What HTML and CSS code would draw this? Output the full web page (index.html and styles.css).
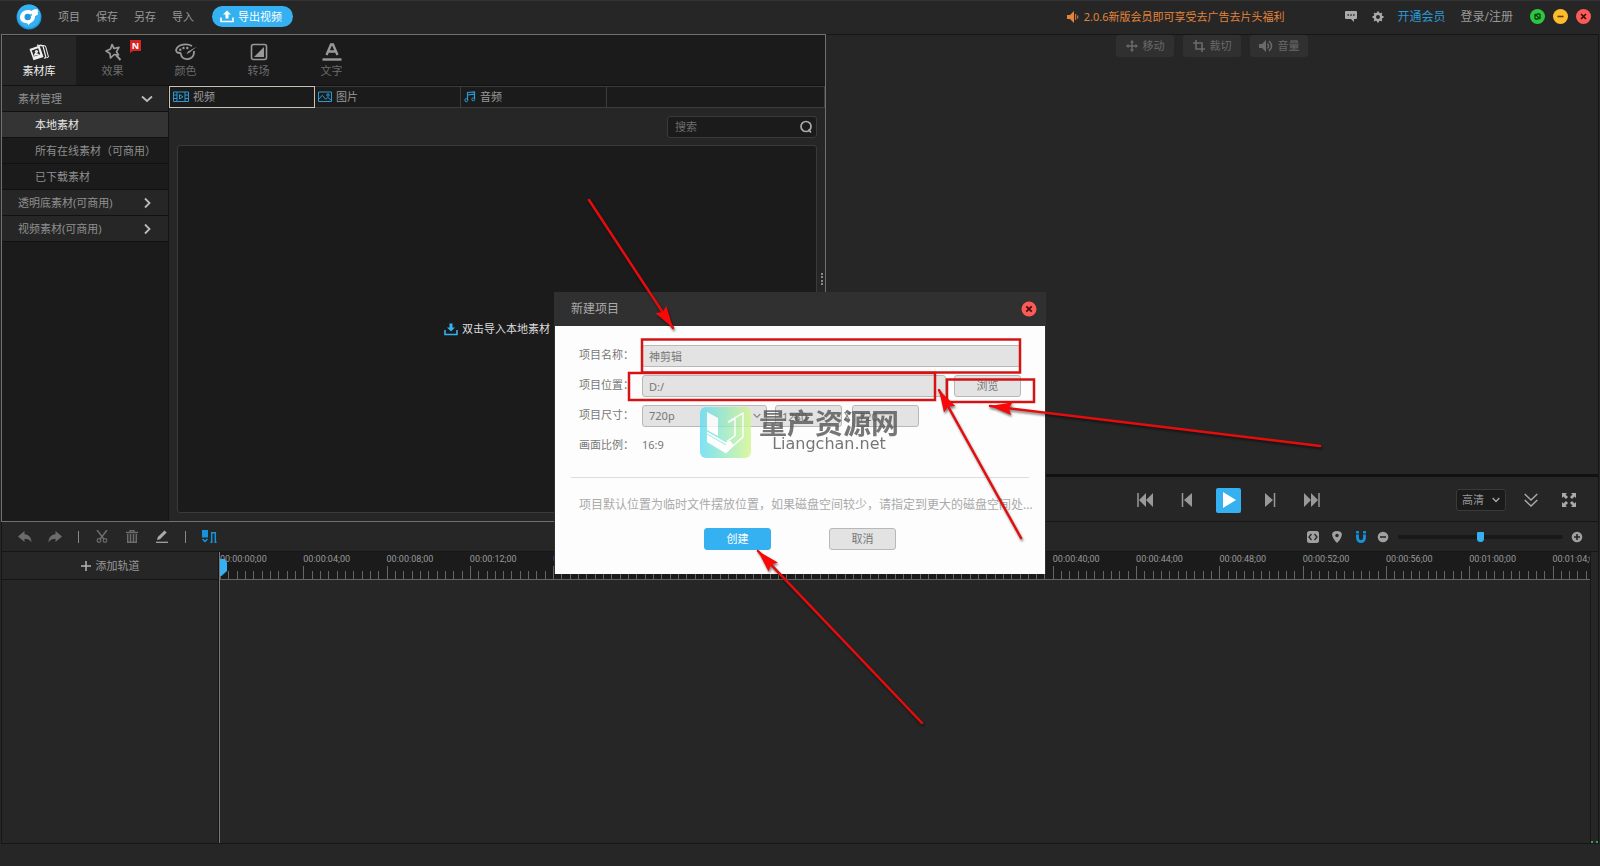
FILE: index.html
```html
<!DOCTYPE html>
<html lang="zh-CN">
<head>
<meta charset="utf-8">
<title>神剪辑</title>
<link rel="stylesheet" href="styles.css">
</head>
<body>
<div class="app">
  <header class="topbar">
    <svg class="logo" viewBox="0 0 26 26" width="26" height="26"><circle cx="13" cy="13" r="12.500" fill="#2196dc"/><circle cx="13" cy="12" r="11.500" fill="#35b1f2"/><path d="M4 13.500c0-4.500 3.500-7.500 8-7.500 1.500 0 2.500.3 3.500 1 1.500-1.500 4-2 6.500-1.500l-.5 1.200 1 .6-1 1.200.7 1.500c-1 1.200-2 1.700-3.200 2 .3 3.500-2.500 6.500-5 7.200L12.500 21l-1.500-1.700C7 19 4 17 4 13.500z" fill="#fff"/><path d="M8.500 13a3.200 3.200 0 1 1 6.400 0 3.200 3.200 0 1 1-6.400 0zM14 11l2-1.500-.5 2.500z" fill="#2196dc"/></svg>
    <nav class="menu">
      <button>项目</button><button>保存</button><button>另存</button><button>导入</button>
    </nav>
    <button class="export"><svg viewBox="0 0 14 13" width="14" height="13"><path d="M7 .5l4 4H8.500v4h-3v-4H3z" fill="#fff"/><path d="M1 7.500v4h12v-4" fill="none" stroke="#fff" stroke-width="1.600"/></svg>导出视频</button>
    <div class="top-right">
      <a class="notice" href="#"><svg viewBox="0 0 12 12" width="12" height="12"><path d="M0 4h3l4-4v12L3 8H0z" fill="#e2843a"/><path d="M8.700 3v6M10.700 4.500v3" stroke="#e2843a"/></svg>2.0.6新版会员即可享受去广告去片头福利</a>
      <button class="icon-btn chat" aria-label="消息"><svg viewBox="0 0 12 11" width="12" height="11"><path d="M1 0h10q1 0 1 1v6q0 1-1 1H9v3L6 8H1Q0 8 0 7V1q0-1 1-1z" fill="#aaa"/><path d="M2.500 4h1.500m1.300 0h1.500m1.300 0h1.500" stroke="#262626" stroke-width="1.500"/></svg></button>
      <button class="icon-btn gear" aria-label="设置"><svg viewBox="0 0 12 12" width="12" height="12"><circle cx="6" cy="6" r="3.200" fill="none" stroke="#aaa" stroke-width="2.400"/><path d="M6 .5v2M6 9.500v2M.5 6h2M9.500 6h2M2.200 2.200l1.400 1.400M8.400 8.400l1.400 1.400M2.200 9.800l1.400-1.400M8.400 3.600l1.400-1.400" stroke="#aaa" stroke-width="1.800"/></svg></button>
      <a class="vip" href="#">开通会员</a>
      <a class="login" href="#">登录/注册</a>
      <div class="window-btns">
        <button aria-label="最大化"><svg viewBox="0 0 15 15" width="15" height="15"><circle cx="7.500" cy="7.500" r="7.500" fill="#2bc840"/><path d="M5 10V5M5 5l5 5M10 10V5M6.500 5H10M5 10h3.500" fill="none" stroke="#0c3d14" stroke-width="1.300"/></svg></button>
        <button aria-label="最小化"><svg viewBox="0 0 15 15" width="15" height="15"><circle cx="7.500" cy="7.500" r="7.500" fill="#fdbc2e"/><path d="M4.500 7.500h6" stroke="#5c3d00" stroke-width="1.600"/></svg></button>
        <button aria-label="关闭"><svg viewBox="0 0 15 15" width="15" height="15"><circle cx="7.500" cy="7.500" r="7.500" fill="#fb5b57"/><path d="M5 5l5 5M10 5l-5 5" stroke="#3a0808" stroke-width="1.600"/></svg></button>
      </div>
    </div>
  </header>

  <main class="main">
    <section class="library">
      <nav class="tool-tabs">
        <button class="tool active"><svg viewBox="0 0 20 18" width="20" height="18"><path d="M11 2l5.500 1 3 11-1.500.8" fill="none" stroke="#eee"/><path d="M8 2.200l6 .8 3 11.500-2 .7" fill="none" stroke="#eee" stroke-width="1.200"/><path d="M.5 6l10-3.500 4 11.500L4.500 17.200z" fill="#eee"/><path d="M2.700 7.500l6.500-2.300 2 6.200-6.300 2.200z" fill="#262626"/><circle cx="7.500" cy="8.500" r="1.600" fill="#eee"/><path d="M4.500 13l1.500-3.500 5 2z" fill="#eee"/></svg>素材库</button>
        <button class="tool"><svg viewBox="0 0 20 18" width="20" height="18"><path d="M9 1.500l2 4 5-1.200-2.500 4.400 2 3.300-4.300-.5L7.500 15 7 10.500 3 8l4.500-2z" fill="none" stroke="#999" stroke-width="1.700" stroke-linejoin="round"/><path d="M13 12l4.500 5" stroke="#999" stroke-width="2"/></svg>效果<span class="badge">N</span></button>
        <button class="tool"><svg viewBox="0 0 22 18" width="22" height="18"><path d="M17 3C12 .2 3 1.200 1.200 6.500c-.6 3 2 3.500 3.800 3.500 1.500 0 .5 2 2 4 2.500 3.200 9.500 2.800 11.300-1.500.8-2 .7-3 .7-4.500" fill="none" stroke="#999" stroke-width="1.800"/><path d="M22 3.500L14 10l-2.500 1 1.500-2.500z" fill="#999"/><circle cx="5.300" cy="6.800" r="1.200" fill="#999"/><circle cx="8.500" cy="5" r="1.200" fill="#999"/><circle cx="12.300" cy="5" r="1.200" fill="#999"/></svg>颜色</button>
        <button class="tool"><svg viewBox="0 0 18 18" width="18" height="18"><rect x="1.500" y="1.500" width="15" height="15" rx="2" fill="none" stroke="#999" stroke-width="1.600"/><path d="M14 4v10H4z" fill="#999"/></svg>转场</button>
        <button class="tool"><svg viewBox="0 0 20 18" width="20" height="18"><path d="M4.500 12L9 1.500h2L15.500 12M6.500 8.500h7" fill="none" stroke="#999" stroke-width="2.400"/><path d="M.5 16.500h19" stroke="#999" stroke-width="2.400"/></svg>文字</button>
      </nav>
      <div class="library-body">
        <aside class="sidebar">
          <button class="group">素材管理<svg viewBox="0 0 12 12" width="12" height="12"><path d="M1 3.500L6 8l5-4.500" fill="none" stroke="#bbb" stroke-width="1.800"/></svg></button>
          <button class="item selected">本地素材</button>
          <button class="item">所有在线素材（可商用）</button>
          <button class="item">已下载素材</button>
          <button class="group">透明底素材(可商用)<svg viewBox="0 0 12 12" width="12" height="12"><path d="M4 1.500L8.500 6 4 10.500" fill="none" stroke="#bbb" stroke-width="1.800"/></svg></button>
          <button class="group">视频素材(可商用)<svg viewBox="0 0 12 12" width="12" height="12"><path d="M4 1.500L8.500 6 4 10.500" fill="none" stroke="#bbb" stroke-width="1.800"/></svg></button>
        </aside>
        <div class="media">
          <div class="media-tabs">
            <button class="media-tab on"><svg viewBox="0 0 16 12" width="16" height="12"><path d="M.5 1h15v9.500H.5zM4 1v9.500M12 1v9.500M.5 4h3.500M.5 7.500h3.500M12 4h3.500M12 7.500h3.500" fill="none" stroke="#2b9ad4"/><path d="M6.500 3.500v4.500l3.500-2.200z" fill="none" stroke="#2b9ad4"/></svg>视频</button>
            <button class="media-tab"><svg viewBox="0 0 14 12" width="14" height="12"><path d="M.5 1h13v9.500H.5zM.5 8.500l3.800-4.200 3.500 4 2-2 3.700 3.200" fill="none" stroke="#2b9ad4"/><circle cx="10" cy="4" r="1.200" fill="none" stroke="#2b9ad4"/></svg>图片</button>
            <button class="media-tab"><svg viewBox="0 0 12 12" width="12" height="12"><path d="M3.500 9V1.500L10.500.8V8M3.500 4l7-.8" fill="none" stroke="#2b9ad4" stroke-width="1.200"/><circle cx="2.300" cy="9.200" r="1.500" fill="none" stroke="#2b9ad4"/><circle cx="9.300" cy="8.300" r="1.500" fill="none" stroke="#2b9ad4"/></svg>音频</button>
            <span class="media-rest"></span>
          </div>
          <div class="media-content">
            <label class="search"><input type="text" placeholder="搜索" aria-label="搜索"><svg viewBox="0 0 14 14" width="14" height="14"><circle cx="7" cy="6.500" r="5" fill="none" stroke="#aaa" stroke-width="1.700"/><path d="M9.500 9.500l2.500 3" stroke="#aaa" stroke-width="1.700"/></svg></label>
            <div class="dropzone"><svg viewBox="0 0 14 13" width="14" height="13"><path d="M7 8.500l4-4H8.500v-4h-3v4H3z" fill="#35b1f2"/><path d="M1 7v4.500h12V7" fill="none" stroke="#35b1f2" stroke-width="1.600"/></svg>双击导入本地素材</div>
          </div>
          <span class="grip"></span>
        </div>
      </div>
    </section>

    <section class="preview">
      <div class="stage">
        <button class="stage-btn"><svg viewBox="0 0 12 12" width="12" height="12"><path d="M6 1v10M1 6h10" stroke="#6a6a6a" stroke-width="1.500"/><path d="M6 0l2.200 2.500H3.800zM6 12l2.200-2.500H3.800zM0 6l2.500-2.200v4.400zM12 6L9.500 3.800v4.400z" fill="#6a6a6a"/></svg>移动</button>
        <button class="stage-btn"><svg viewBox="0 0 12 12" width="12" height="12"><path d="M3 0v9h9M0 3h9v9" fill="none" stroke="#6a6a6a" stroke-width="1.600"/></svg>裁切</button>
        <button class="stage-btn"><svg viewBox="0 0 14 12" width="14" height="12"><path d="M0 4h3l4-4v12L3 8H0z" fill="#6a6a6a"/><path d="M8.500 3.500q2 2.500 0 5M10 1q5 5 0 10" fill="none" stroke="#6a6a6a" stroke-width="1.500"/></svg>音量</button>
      </div>
      <div class="player">
        <div class="transport">
          <button aria-label="开头"><svg viewBox="0 0 16 14" width="16" height="14"><path d="M1 0v14" stroke="#999" stroke-width="1.500"/><path d="M9 0v14L2 7zM16 0v14L9 7z" fill="#999"/></svg></button>
          <button aria-label="上一帧"><svg viewBox="0 0 16 14" width="16" height="14"><path d="M3.500 0v14" stroke="#999" stroke-width="1.500"/><path d="M13 0v14L5 7z" fill="#999"/></svg></button>
          <button class="play" aria-label="播放"><svg viewBox="0 0 16 16" width="16" height="16"><path d="M2 0l13 8-13 8z" fill="#fff"/></svg></button>
          <button aria-label="下一帧"><svg viewBox="0 0 16 14" width="16" height="14"><path d="M12.500 0v14" stroke="#999" stroke-width="1.500"/><path d="M3 0v14l8-7z" fill="#999"/></svg></button>
          <button aria-label="结尾"><svg viewBox="0 0 16 14" width="16" height="14"><path d="M15 0v14" stroke="#999" stroke-width="1.500"/><path d="M7 0v14l7-7zM0 0v14l7-7z" fill="#999"/></svg></button>
        </div>
        <div class="player-right">
          <span class="quality"><select aria-label="清晰度"><option>高清</option></select><svg viewBox="0 0 8 6" width="8" height="6"><path d="M.7 1L4 4.500 7.300 1" fill="none" stroke="#aaa" stroke-width="1.300"/></svg></span>
          <button aria-label="收起"><svg viewBox="0 0 14 14" width="14" height="14"><path d="M.7 1L7 7l6.300-6M.7 7L7 13l6.300-6" fill="none" stroke="#aaa" stroke-width="1.400"/></svg></button>
          <button aria-label="全屏"><svg viewBox="0 0 14 14" width="14" height="14"><path d="M0 0h5L3.500 1.500 6 4 4 6 1.500 3.500 0 5zM14 0v5l-1.500-1.500L10 6 8 4l2.500-2.500L9 0zM0 14V9l1.500 1.500L4 8l2 2-2.500 2.500L5 14zM14 14H9l1.500-1.500L8 10l2-2 2.500 2.500L14 9z" fill="#aaa"/></svg></button>
        </div>
      </div>
    </section>
  </main>

  <section class="timeline">
    <div class="edit-bar">
      <div class="edit-left">
        <button aria-label="撤销"><svg viewBox="0 0 14 12" width="14" height="12"><path d="M0 5.500L6.500 0v3.200C11 3.500 13.500 6.500 13.500 11.500 11.500 8.500 9.500 7.800 6.500 7.800V11z" fill="#6c6c6c"/></svg></button>
        <button aria-label="重做"><svg viewBox="0 0 14 12" width="14" height="12"><path d="M14 5.500L7.500 0v3.200C3 3.500.5 6.500.5 11.500 2.500 8.500 4.500 7.800 7.500 7.800V11z" fill="#6c6c6c"/></svg></button>
        <i class="sep"></i>
        <button aria-label="剪切"><svg viewBox="0 0 12 13" width="12" height="13"><path d="M1 0l6.800 9M11 0L4.200 9" stroke="#6c6c6c" stroke-width="1.500"/><circle cx="3" cy="10.500" r="1.800" fill="none" stroke="#6c6c6c" stroke-width="1.200"/><circle cx="9" cy="10.500" r="1.800" fill="none" stroke="#6c6c6c" stroke-width="1.200"/></svg></button>
        <button aria-label="删除"><svg viewBox="0 0 12 13" width="12" height="13"><path d="M0 2.500h12M4 2V.7h4V2" fill="none" stroke="#6c6c6c" stroke-width="1.300"/><path d="M1.700 4v8.300h8.600V4M4.500 4v8M7.500 4v8" fill="none" stroke="#6c6c6c" stroke-width="1.500"/></svg></button>
        <button aria-label="编辑"><svg viewBox="0 0 12 13" width="12" height="13"><path d="M1 10l.8-3L8.500.5l2.200 2L4 9.300z" fill="#aaa"/><path d="M0 12.300h12" stroke="#aaa" stroke-width="1.200"/></svg></button>
        <i class="sep"></i>
        <button aria-label="吸附轨道"><svg viewBox="0 0 15 13" width="15" height="13"><path d="M0 0h6v7.500H0z" fill="#1593dc"/><path d="M.5 9L3 11.500 5.500 9M9.700 12.500V2.700h3.600v9.800M8.500 12.200h2M12.500 12.200h2" fill="none" stroke="#1593dc" stroke-width="1.500"/></svg></button>
      </div>
      <div class="edit-right">
        <button aria-label="适应"><svg viewBox="0 0 12 12" width="12" height="12"><rect width="12" height="12" rx="2.500" fill="#a0a0a0"/><path d="M4.500 3L2 6l2.500 3M7.500 3L10 6 7.500 9" fill="none" stroke="#262626" stroke-width="1.300"/></svg></button>
        <button aria-label="标记"><svg viewBox="0 0 12 12" width="12" height="12"><path d="M6 0c7 0 6 6 0 12C0 6-1 0 6 0z" fill="#a0a0a0"/><circle cx="6" cy="4.500" r="1.700" fill="#262626"/></svg></button>
        <button aria-label="磁吸"><svg viewBox="0 0 12 12" width="12" height="12"><path d="M2.500 3.500v3.300c0 5 7 5 7 0V3.500" fill="none" stroke="#1593dc" stroke-width="2.800"/><path d="M2.500 0v2.500M9.500 0v2.500" stroke="#1593dc" stroke-width="2.800"/></svg></button>
        <button aria-label="缩小"><svg viewBox="0 0 12 12" width="12" height="12"><circle cx="6" cy="6" r="5.300" fill="#a0a0a0"/><path d="M3 6h6" stroke="#262626" stroke-width="1.600"/></svg></button>
        <input class="zoom" type="range" min="0" max="100" value="50" aria-label="缩放">
        <button aria-label="放大"><svg viewBox="0 0 12 12" width="12" height="12"><circle cx="6" cy="6" r="5.300" fill="#a0a0a0"/><path d="M3 6h6M6 3v6" stroke="#262626" stroke-width="1.600"/></svg></button>
      </div>
    </div>
    <div class="tracks">
      <div class="track-heads"><button class="add-track"><svg viewBox="0 0 10 10" width="10" height="10"><path d="M0 5h10M5 0v10" stroke="#b5b5b5" stroke-width="1.500"/></svg>添加轨道</button></div>
      <div class="track-area">
        <div class="ruler" id="ruler"></div>
        <span class="playhead"></span>
      </div>
      <div class="meter"></div>
    </div>
  </section>
  <footer class="status"></footer>
</div>

<div class="overlay">
  <form class="dialog" role="dialog" aria-labelledby="dlg-title">
    <div class="dialog-head"><h2 id="dlg-title">新建项目</h2>
      <button type="button" aria-label="关闭"><svg viewBox="0 0 16 16" width="16" height="16"><circle cx="8" cy="8" r="7.500" fill="#fb5b57"/><path d="M5.300 5.300l5.400 5.400M10.700 5.300l-5.400 5.400" stroke="#4a0c0c" stroke-width="1.800"/></svg></button></div>
    <div class="dialog-body">
      <div class="row"><label for="name">项目名称：</label><input class="field grow" id="name" type="text" value="神剪辑"></div>
      <div class="row"><label for="loc">项目位置：</label><input class="field grow" id="loc" type="text" value="D:/"><button type="button" class="btn">浏览</button></div>
      <div class="row"><label for="size">项目尺寸：</label>
        <span class="size-wrap"><select class="field size" id="size"><option>720p</option></select><svg viewBox="0 0 8 6" width="8" height="6"><path d="M.7 1L4 4.500 7.300 1" fill="none" stroke="#888" stroke-width="1.200"/></svg></span>
        <input class="field num" type="text" value="1280" aria-label="宽度"><span class="times">X</span><input class="field num" type="text" value="720" aria-label="高度"></div>
      <div class="row"><span class="label">画面比例：</span><span class="ratio">16:9</span></div>
      <hr>
      <p class="hint">项目默认位置为临时文件摆放位置，如果磁盘空间较少，请指定到更大的磁盘空间处...</p>
      <div class="actions"><button type="submit" class="btn primary">创建</button><button type="button" class="btn">取消</button></div>
    </div>
    <div class="watermark">
      <svg viewBox="0 0 51 51" width="51" height="51"><defs><linearGradient id="wm" x1="0" x2="1"><stop offset="0" stop-color="#5fdcf5"/><stop offset="1" stop-color="#d3f78c"/></linearGradient></defs><rect width="51" height="51" rx="6" fill="url(#wm)"/><path d="M7 5l11 6v18L7 23zM7 24.500l19 11 4-2 4 5-8 8L7 35z" fill="#fff"/><path d="M7 27l19 11" stroke="#7fe6e4"/><path d="M28 15l15-9v24L26 45M28 15.500l7-4v17l-8 6" fill="none" stroke="#fff" stroke-width="1.500"/></svg>
      <div><strong>量产资源网</strong><span>Liangchan.net</span></div>
    </div>
  </form>
</div>

<svg class="annotations" viewBox="0 0 1600 866" aria-hidden="true">
  <defs><marker id="head" markerUnits="userSpaceOnUse" markerWidth="26" markerHeight="16" refX="24" refY="8" orient="auto"><path d="M24 8L2 1.500l3 6.500-3 6.500z" fill="#f80808"/></marker></defs>
  <g fill="none" stroke="#d41414" stroke-width="2.500"><rect x="642" y="339.500" width="378" height="33"/><rect x="629" y="373" width="306" height="27"/><rect x="947" y="379.500" width="87" height="22.500"/></g>
  <g class="arrows" stroke="#e40c0c" stroke-width="2.500" stroke-linecap="round">
    <path d="M589 200L673 328" marker-end="url(#head)"/><path d="M1320 446L990 406" marker-end="url(#head)"/><path d="M1021 538L939 390" marker-end="url(#head)"/><path d="M922 723L758 551" marker-end="url(#head)"/>
  </g>
</svg>
<script src="ruler.js"></script>
</body>
</html>
```
FILE: styles.css
```css
* { box-sizing: border-box; }
body { margin: 0; background: #262626; color: #999; font: 11px/16px "Noto Sans", "Noto Sans CJK SC", sans-serif; }
button, input, select { font: inherit; color: inherit; }
button { background: none; border: 0; padding: 0; display: flex; align-items: center; justify-content: center; white-space: nowrap; }
select { appearance: none; }
a { text-decoration: none; color: inherit; }
svg { flex: none; display: block; }
.app { min-height: 100vh; display: flex; flex-direction: column; border-top: 1px solid #333; padding: 0 1px; }

.topbar { height: 33px; display: flex; align-items: center; padding: 0 8px 2px 15px; }
.menu { display: flex; gap: 16px; margin: 0 18px 0 16px; }
.export { height: 21px; padding: 0 11px 0 8px; gap: 4px; border-radius: 11px; background: #35b1f2; color: #fff; }
.top-right { margin-left: auto; display: flex; align-items: center; font-size: 12px; }
.notice { display: flex; align-items: center; gap: 5px; color: #e2843a; font-size: 11px; margin-right: 60px; }
.gear { margin: 0 14px 0 15px; }
.vip { color: #2b9ad4; margin-right: 15px; }
.window-btns { display: flex; gap: 8px; margin-left: 17px; }

.main { flex: 488 1 0; display: grid; grid-template-columns: 826fr 774fr; }
.library { border: 1px solid #707070; background: #1b1b1b; display: flex; flex-direction: column; }
.tool-tabs { display: flex; height: 50px; padding-top: 1px; }
.tool { width: 73px; flex-direction: column; gap: 2px; position: relative; color: #6c6c6c; }
.tool.active { width: 74px; background: #262626; color: #eee; }
.badge { position: absolute; left: 54px; top: 4px; width: 11px; height: 13px; background: #d62424; color: #fff; font: bold 9px/11px "Noto Sans", sans-serif; clip-path: polygon(0 0, 100% 0, 100% 85%, 30% 85%, 0 100%); }
.library-body { flex: 1; display: flex; border-top: 1px solid #111; }
.sidebar { width: 167px; border-right: 1px solid #151515; }
.sidebar button { width: 100%; height: 26px; border-bottom: 1px solid #111; justify-content: space-between; color: #8f8f8f; }
.sidebar .group { background: #262626; padding: 0 15px 0 16px; }
.sidebar .item { padding: 0 0 0 33px; }
.sidebar .selected { background: #343434; color: #e8e8e8; }
.media { flex: 1; display: flex; flex-direction: column; background: #262626; position: relative; }
.media-tabs { display: flex; height: 22px; background: #1b1b1b; }
.media-tab { width: 146px; justify-content: flex-start; gap: 4px; padding: 0 3px; border: 1px solid #3c3c3c; border-left: 0; }
.media-tab.on { border: 1px solid #c8c4b8; }
.media-rest { flex: 1; border: solid #3c3c3c; border-width: 1px 1px 1px 0; }
.media-content { flex: 1; display: flex; flex-direction: column; padding: 8px 8px 8px 8px; gap: 7px; }
.search { align-self: flex-end; width: 150px; height: 22px; display: flex; align-items: center; background: #1b1b1b; border: 1px solid #3a3a3a; border-radius: 3px; padding: 0 3px 0 7px; }
.search input { flex: 1; min-width: 0; background: none; border: 0; padding: 0; outline: 0; }
.search input::placeholder { color: #6c6c6c; }
.dropzone { flex: 1; display: flex; align-items: center; justify-content: center; gap: 4px; background: #1b1b1b; border: 1px solid #3a3a3a; border-radius: 3px; color: #ddd; }
.grip { position: absolute; right: 2px; top: 50%; height: 12px; border-left: 2px dotted #888; margin-top: -31px; }

.preview { display: flex; flex-direction: column; border: 1px solid #161616; border-left: 0; }
.stage { flex: 1; display: flex; justify-content: center; align-items: flex-start; gap: 9px; padding: 0 0 0 1px; border-bottom: 3px solid #111; }
.stage-btn { width: 58px; height: 22px; gap: 4px; background: #303030; border-radius: 3px; color: #6a6a6a; }
.player { height: 44px; display: grid; grid-template-columns: 1fr auto 1fr; align-items: center; padding-top: 2px; }
.transport { grid-column: 2; display: flex; align-items: center; gap: 26px; padding-left: 34px; }
.play { width: 25px; height: 25px; background: #35b1f2; border-radius: 2px; margin: 0 -5px; }
.player-right { justify-self: end; display: flex; align-items: center; gap: 24px; padding-right: 22px; }
.quality { position: relative; margin-right: -6px; }
.quality select { width: 50px; height: 22px; background: #1b1b1b; border: 1px solid #3a3a3a; border-radius: 3px; padding: 0 0 0 5px; display: block; }
.quality svg { position: absolute; right: 6px; top: 8px; pointer-events: none; }

.timeline { flex: 321 1 0; display: flex; flex-direction: column; border: solid #161616; border-width: 0 1px 1px; }
.edit-bar { height: 29px; display: flex; align-items: center; justify-content: space-between; padding: 0 15px 0 16px; }
.edit-left { display: flex; align-items: center; gap: 16px; }
.sep { width: 1px; height: 12px; background: #888; }
.edit-left button:nth-of-type(n+3) { width: 14px; }
.edit-right { display: flex; align-items: center; gap: 12px; }
.edit-right button:nth-of-type(4) { margin-left: -2px; }
.zoom { appearance: none; width: 165px; height: 4px; margin: 0 -3px; background: #191919; border-radius: 2px; }
.zoom::-webkit-slider-thumb { appearance: none; width: 7px; height: 10px; background: #35b1f2; border-radius: 1px 1px 4px 4px; }
.zoom + button { margin-left: -1px; }
.tracks { flex: 1; display: flex; border-top: 1px solid #161616; }
.track-heads { width: 217px; border-right: 1px solid #161616; }
.add-track { width: 100%; height: 28px; gap: 5px; border-bottom: 1px solid #161616; }
.track-area { flex: 1; min-width: 0; position: relative; border-left: 1px solid #777; }
.ruler { height: 28px; display: flex; overflow: hidden; background: #1b1b1b; border-bottom: 1px solid #666; }
.seg { flex: none; width: calc(100% / 16.45); display: flex; flex-direction: column; justify-content: space-between; font: 9px/14px Roboto, sans-serif; }
.ticks { display: grid; grid-template-columns: repeat(10, 1fr); align-items: end; height: 13px; }
.ticks i { height: 8px; border-left: 1px solid #666; }
.ticks i:first-child { height: 13px; }
.playhead { position: absolute; left: 0; top: 7px; width: 7px; height: 17px; background: #35b1f2; clip-path: polygon(0 0, 70% 0, 100% 20%, 100% 70%, 20% 100%, 0 100%); }
.meter { width: 8px; border-left: 1px solid #161616; display: flex; align-items: flex-end; }
.meter::after { content: ""; flex: 1; border-bottom: 2px dotted #3f9a50; }
.status { height: 22px; }

.overlay { position: fixed; inset: 0; display: flex; align-items: center; justify-content: center; }
.dialog { width: 492px; position: relative; background: #303030; color: #777; }
.dialog-head { height: 34px; display: flex; align-items: center; justify-content: space-between; padding: 0 9px 0 17px; }
.dialog-head h2 { margin: 0; font-size: 12px; font-weight: 400; color: #aaa; }
.dialog-body { margin: 0 1px; padding: 17px 24px 24px; background: #fdfdfd; display: flex; flex-direction: column; gap: 6px; }
.row { display: flex; align-items: flex-end; height: 24px; }
.row label, .label { width: 63px; flex: none; }
.row label, .label, .ratio { line-height: 24px; }
.field { height: 22px; border: 1px solid #b8b8b8; border-radius: 3px; background: #e3e3e3; padding: 0 6px; min-width: 0; }
.grow { flex: 1; }
.size-wrap { position: relative; margin-right: 8px; }
.size { width: 125px; display: block; }
.size-wrap svg { position: absolute; right: 6px; top: 8px; pointer-events: none; }
.num { width: 67px; }
.times { width: 10px; line-height: 22px; text-align: center; }
.btn { width: 67px; height: 22px; border: 1px solid #b8b8b8; border-radius: 3px; background: #e3e3e3; }
.row .btn { margin-left: 8px; }
.btn.primary { background: #35b1f2; border-color: #35b1f2; color: #fff; }
hr { width: calc(100% + 16px); margin: 14px -8px 13px; border: 0; border-top: 1px solid #ddd; }
.hint { margin: 0 -12px 9px 0; font-size: 12px; color: #aaa; white-space: nowrap; }
.actions { display: flex; justify-content: center; gap: 58px; }
.watermark { position: absolute; left: 146px; top: 115px; display: flex; gap: 8px; opacity: .8; color: #555; }
.watermark div { display: flex; flex-direction: column; align-items: center; padding-top: 1px; }
.watermark strong { font: bold 28px/28px "Noto Sans CJK SC", sans-serif; }
.watermark span { font: 16px/16px "DejaVu Sans", sans-serif; }
.annotations { position: fixed; inset: 0; width: 100%; height: 100%; pointer-events: none; }
.arrows { filter: drop-shadow(1px 2px 1px rgba(0, 0, 0, .5)); }
```
FILE: ruler.js
```js
const ruler = document.getElementById('ruler');
for (let s = 0; s <= 64; s += 4) {
  const seg = document.createElement('div');
  seg.className = 'seg';
  const label = document.createElement('span');
  const mm = String(Math.floor(s / 60)).padStart(2, '0');
  const ss = String(s % 60).padStart(2, '0');
  label.textContent = `00:${mm}:${ss};00`;
  const ticks = document.createElement('div');
  ticks.className = 'ticks';
  for (let i = 0; i < 10; i++) ticks.appendChild(document.createElement('i'));
  seg.append(label, ticks);
  ruler.appendChild(seg);
}
```
